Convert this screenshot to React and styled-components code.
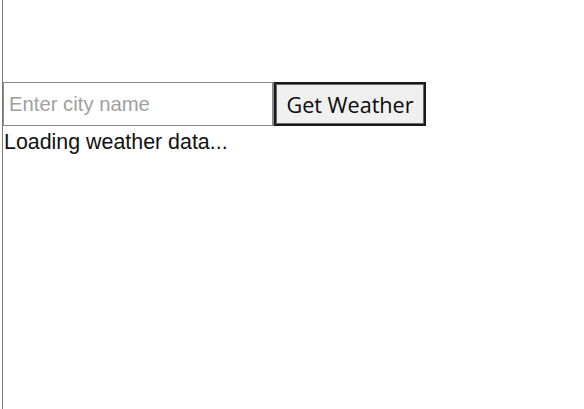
import React, { useState } from 'react';
import styled, { createGlobalStyle } from 'styled-components';

const GlobalStyle = createGlobalStyle`
  html, body {
    margin: 0;
    padding: 0;
    background: #ffffff;
    overflow: hidden;
  }
`;

const Page = styled.div`
  box-sizing: border-box;
  height: 100vh;
  margin-left: 2px;
  border-left: 1px solid #7a7a7a;
  padding-top: 82px;
  font-family: 'Liberation Sans', Arial, sans-serif;
  color: #111;
`;

const SearchRow = styled.div`
  display: flex;
  align-items: stretch;
`;

const CityInput = styled.input`
  box-sizing: border-box;
  width: 271px;
  height: 44px;
  margin: 0;
  padding: 0 5px;
  border: 1px solid #8a8a8a;
  border-right-width: 2px;
  font-family: 'Liberation Sans', Arial, sans-serif;
  font-size: 20.3px;
  color: #222;
  outline: none;

  &::placeholder {
    color: #a0a0a0;
  }
`;

const FetchButton = styled.button`
  box-sizing: border-box;
  width: 152px;
  height: 44px;
  margin: 0;
  padding: 0 6px;
  background: #f0f0f0;
  border: 2px solid #1a1a1a;
  box-shadow: inset 0 0 0 1px #6a6a6a;
  font-family: 'Open Sans', 'Noto Sans', sans-serif;
  font-size: 21.6px;
  color: #0a0a0a;
  cursor: pointer;
`;

const Status = styled.div`
  margin-top: 1px;
  padding-left: 1px;
  font-size: 21.4px;
  line-height: 30px;
`;

export default function App() {
  const [city, setCity] = useState('');

  return (
    <>
      <GlobalStyle />
      <Page>
        <SearchRow>
          <CityInput
            type="text"
            value={city}
            onChange={(e) => setCity(e.target.value)}
            placeholder="Enter city name"
          />
          <FetchButton>Get Weather</FetchButton>
        </SearchRow>
        <Status>Loading weather data...</Status>
      </Page>
    </>
  );
}
